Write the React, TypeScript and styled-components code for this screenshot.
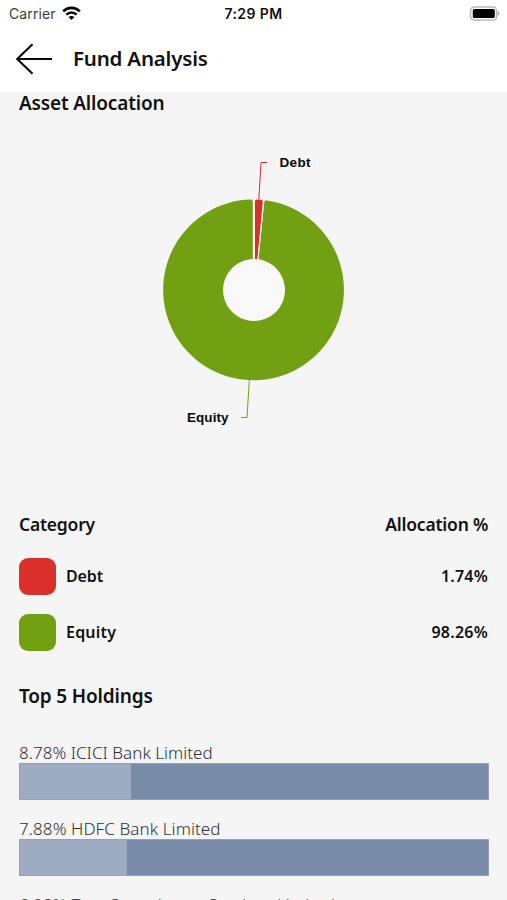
import React from 'react';
import styled, { createGlobalStyle } from 'styled-components';

const GlobalStyle = createGlobalStyle`
  *, *::before, *::after { box-sizing: border-box; }
  body { margin: 0; background: #f5f5f5; color: #111; font-family: "Noto Sans", sans-serif; }
`;

const Screen = styled.main`
  width: 507px;
  height: 900px;
  overflow: hidden;
  background: #f5f5f5;
`;

const StatusBar = styled.div`
  display: grid;
  grid-template-columns: 1fr auto 1fr;
  align-items: center;
  height: 27px;
  padding: 0 7px 0 9px;
  background: #fff;
  font-family: Inter, sans-serif;
  font-size: 14px;
`;

const Carrier = styled.div`
  display: flex;
  align-items: center;
  gap: 6px;
  color: #3c3c3c;
  letter-spacing: 0.1px;
`;

const Clock = styled.div`
  margin-right: 2px;
  color: #111;
  font-weight: 600;
  letter-spacing: 0.4px;
`;

const BatteryWrap = styled.div`
  display: flex;
  justify-content: flex-end;
`;

const Header = styled.header`
  display: flex;
  align-items: center;
  gap: 20px;
  height: 65px;
  padding: 0 15px 2px;
  background: #fff;
`;

const BackButton = styled.button`
  display: flex;
  padding: 0;
  border: 0;
  background: none;
`;

const Title = styled.h1`
  margin: 0;
  padding-bottom: 1px;
  font-size: 20.5px;
  line-height: 28px;
  font-weight: 600;
  letter-spacing: -0.2px;
`;

const Content = styled.div`
  padding: 0 18px 0 19px;
`;

const SectionTitle = styled.h2`
  margin: 0;
  font-size: 19px;
  line-height: 23px;
  font-weight: 600;
  letter-spacing: -0.17px;
`;

const Chart = styled.svg`
  display: block;
  width: 470px;
  height: 395px;
  font: bold 13.5px "Liberation Sans", sans-serif;
`;

const Table = styled.section`
  display: flex;
  flex-direction: column;
  margin-bottom: 24px;
`;

const TableHead = styled.div`
  display: flex;
  justify-content: space-between;
  margin-bottom: 10.5px;
  padding-right: 1px;
  font-size: 17.5px;
  line-height: 28px;
  font-weight: 600;
  letter-spacing: -0.22px;
`;

const TableRow = styled.div`
  display: flex;
  align-items: center;
  gap: 10px;
  height: 56px;
  font-size: 16px;
  line-height: 24px;
  font-weight: 600;
`;

const Swatch = styled.span<{ $color: string }>`
  width: 37px;
  height: 37px;
  border-radius: 9px;
  background: ${(p) => p.$color};
`;

const Name = styled.span<{ $spacing: string }>`
  padding-bottom: 2px;
  letter-spacing: ${(p) => p.$spacing};
`;

const Value = styled.span`
  margin-left: auto;
  padding: 0 1px 2px 0;
  letter-spacing: 0.25px;
`;

const Holdings = styled.section`
  display: flex;
  flex-direction: column;
  gap: 16px;
  padding-top: 32.5px;
`;

const Holding = styled.div`
  display: flex;
  flex-direction: column;
`;

const HoldingName = styled.span<{ $spacing: string }>`
  height: 23px;
  padding-top: 1px;
  color: #303030;
  font-size: 17px;
  line-height: 23px;
  font-weight: 300;
  letter-spacing: ${(p) => p.$spacing};
  white-space: nowrap;
`;

const Track = styled.div`
  height: 37px;
  border: 1px solid #91a2b9;
  background: #788ca9;
`;

const Fill = styled.div`
  height: 100%;
  background: #9dabc3;
`;

const allocations = [
  { name: 'Debt', value: '1.74%', color: '#da3029', spacing: '-0.1px' },
  { name: 'Equity', value: '98.26%', color: '#71a012', spacing: '0.2px' },
];

const holdings = [
  { label: '8.78% ICICI Bank Limited', fill: 111, spacing: '0.03px' },
  { label: '7.88% HDFC Bank Limited', fill: 107, spacing: '0.09px' },
  { label: '6.98% Tata Consultancy Services Limited', fill: 100, spacing: '0.15px' },
];

const WifiIcon = () => (
  <svg width="19" height="15" viewBox="0 0 19 15" fill="none" stroke="#080808">
    <path d="M1.2 5.3C5.8.7 13.2.7 17.8 5.3" strokeWidth="2.6" />
    <path d="M4.3 8.6c2.9-2.9 7.5-2.9 10.4 0" strokeWidth="2.4" />
    <path d="M9.5 14 6.6 11.1c1.6-1.6 4.2-1.6 5.8 0Z" fill="#080808" stroke="none" />
  </svg>
);

const BatteryIcon = () => (
  <svg width="31" height="15" viewBox="0 0 31 15">
    <rect x="1.6" y="1" width="26" height="13" rx="3.6" fill="#fff" stroke="#b9b9b9" strokeWidth="1.5" />
    <rect x="3.8" y="3" width="22" height="9" rx="1.5" fill="#000" />
    <path d="M28.6 5.2c2.4.7 2.4 3.9 0 4.6Z" fill="#aaa" />
  </svg>
);

const BackIcon = () => (
  <svg width="38" height="32" viewBox="0 0 38 32" fill="none" stroke="#080808" strokeWidth="2.1">
    <path d="M37 16H2M17.5 1.2 2.2 16l15.3 14.8" />
  </svg>
);

const AllocationChart = () => (
  <Chart viewBox="19 115 470 395">
    <circle cx="254" cy="290" r="30.8" fill="#f9f9f9" />
    <path
      d="M266.6 200.4A90.4 90.4 0 1 1 250.5 199.5Q252.8 199.4 252.8 201.4V259A31 31 0 1 0 258.5 259.3L264.2 202.5Q264.5 200.1 266.6 200.4Z"
      fill="#71a012"
    />
    <path d="M254.9 201.5Q254.9 199.5 257 199.5L260.8 199.7Q263 199.9 262.8 202L257.4 259H254.9Z" fill="#da3029" />
    <path d="M253.8 200.5V259M263.6 202 258.1 259" stroke="#fff8e8" strokeWidth=".9" />
    <path d="M258.8 199.4 261 162.5H267" fill="none" stroke="#da3029" strokeWidth="1" />
    <path d="M249.3 380.3 247 417.5H241" fill="none" stroke="#71a012" strokeWidth="1" />
    <text x="279.5" y="167.2" textLength="31" fill="#080808">Debt</text>
    <text x="187" y="422.2" textLength="41.5" fill="#080808">Equity</text>
  </Chart>
);

export default function App() {
  return (
    <>
      <GlobalStyle />
      <Screen>
        <StatusBar>
          <Carrier>Carrier<WifiIcon /></Carrier>
          <Clock>7:29 PM</Clock>
          <BatteryWrap><BatteryIcon /></BatteryWrap>
        </StatusBar>
        <Header>
          <BackButton aria-label="Back"><BackIcon /></BackButton>
          <Title>Fund Analysis</Title>
        </Header>
        <Content>
          <SectionTitle>Asset Allocation</SectionTitle>
          <AllocationChart />
          <Table>
            <TableHead>
              <span>Category</span>
              <span>Allocation %</span>
            </TableHead>
            {allocations.map((a) => (
              <TableRow key={a.name}>
                <Swatch $color={a.color} />
                <Name $spacing={a.spacing}>{a.name}</Name>
                <Value>{a.value}</Value>
              </TableRow>
            ))}
          </Table>
          <SectionTitle>Top 5 Holdings</SectionTitle>
          <Holdings>
            {holdings.map((h) => (
              <Holding key={h.label}>
                <HoldingName $spacing={h.spacing}>{h.label}</HoldingName>
                <Track><Fill style={{ width: h.fill }} /></Track>
              </Holding>
            ))}
          </Holdings>
        </Content>
      </Screen>
    </>
  );
}
